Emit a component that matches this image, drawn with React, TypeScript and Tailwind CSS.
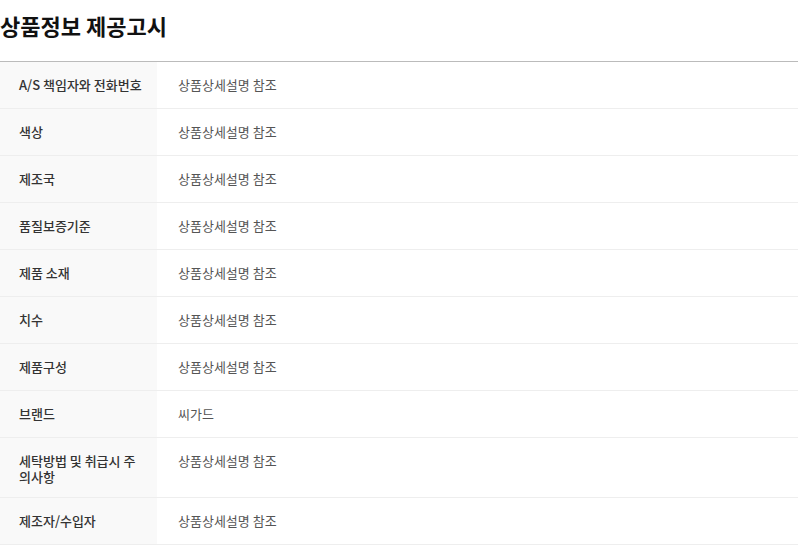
import React from "react";

const rows: [string, string, boolean?][] = [
  ["A/S 책임자와 전화번호", "상품상세설명 참조"],
  ["색상", "상품상세설명 참조"],
  ["제조국", "상품상세설명 참조"],
  ["품질보증기준", "상품상세설명 참조"],
  ["제품 소재", "상품상세설명 참조"],
  ["치수", "상품상세설명 참조"],
  ["제품구성", "상품상세설명 참조"],
  ["브랜드", "씨가드"],
  ["세탁방법 및 취급시 주의사항", "상품상세설명 참조", true],
  ["제조자/수입자", "상품상세설명 참조"],
];

export default function App() {
  return (
    <div
      className="w-[798px] h-[545px] overflow-hidden bg-white"
      style={{ fontFamily: '"Noto Sans CJK KR", "Noto Sans", sans-serif' }}
    >
      <h2 className="text-[22px] font-bold text-[#111] leading-[28px] pt-[11px] pb-[22px]">
        상품정보 제공고시
      </h2>
      <div className="border-t border-[#bbbbbb]">
        {rows.map(([k, v, tall], i) => (
          <div key={i} className="flex border-b border-[#eeeeee]">
            <div
              className={`w-[157px] shrink-0 bg-[#f9f9f9] pl-[19px] pr-[13px] text-[13px] leading-[16px] text-[#333] font-medium ${
                tall ? "pt-[15px] pb-[12px]" : "py-[15px]"
              }`}
            >
              {k}
            </div>
            <div
              className={`flex-1 pl-[21px] text-[13px] leading-[16px] text-[#555] ${
                tall ? "pt-[15px] pb-[12px]" : "py-[15px]"
              }`}
            >
              {v}
            </div>
          </div>
        ))}
      </div>
    </div>
  );
}
